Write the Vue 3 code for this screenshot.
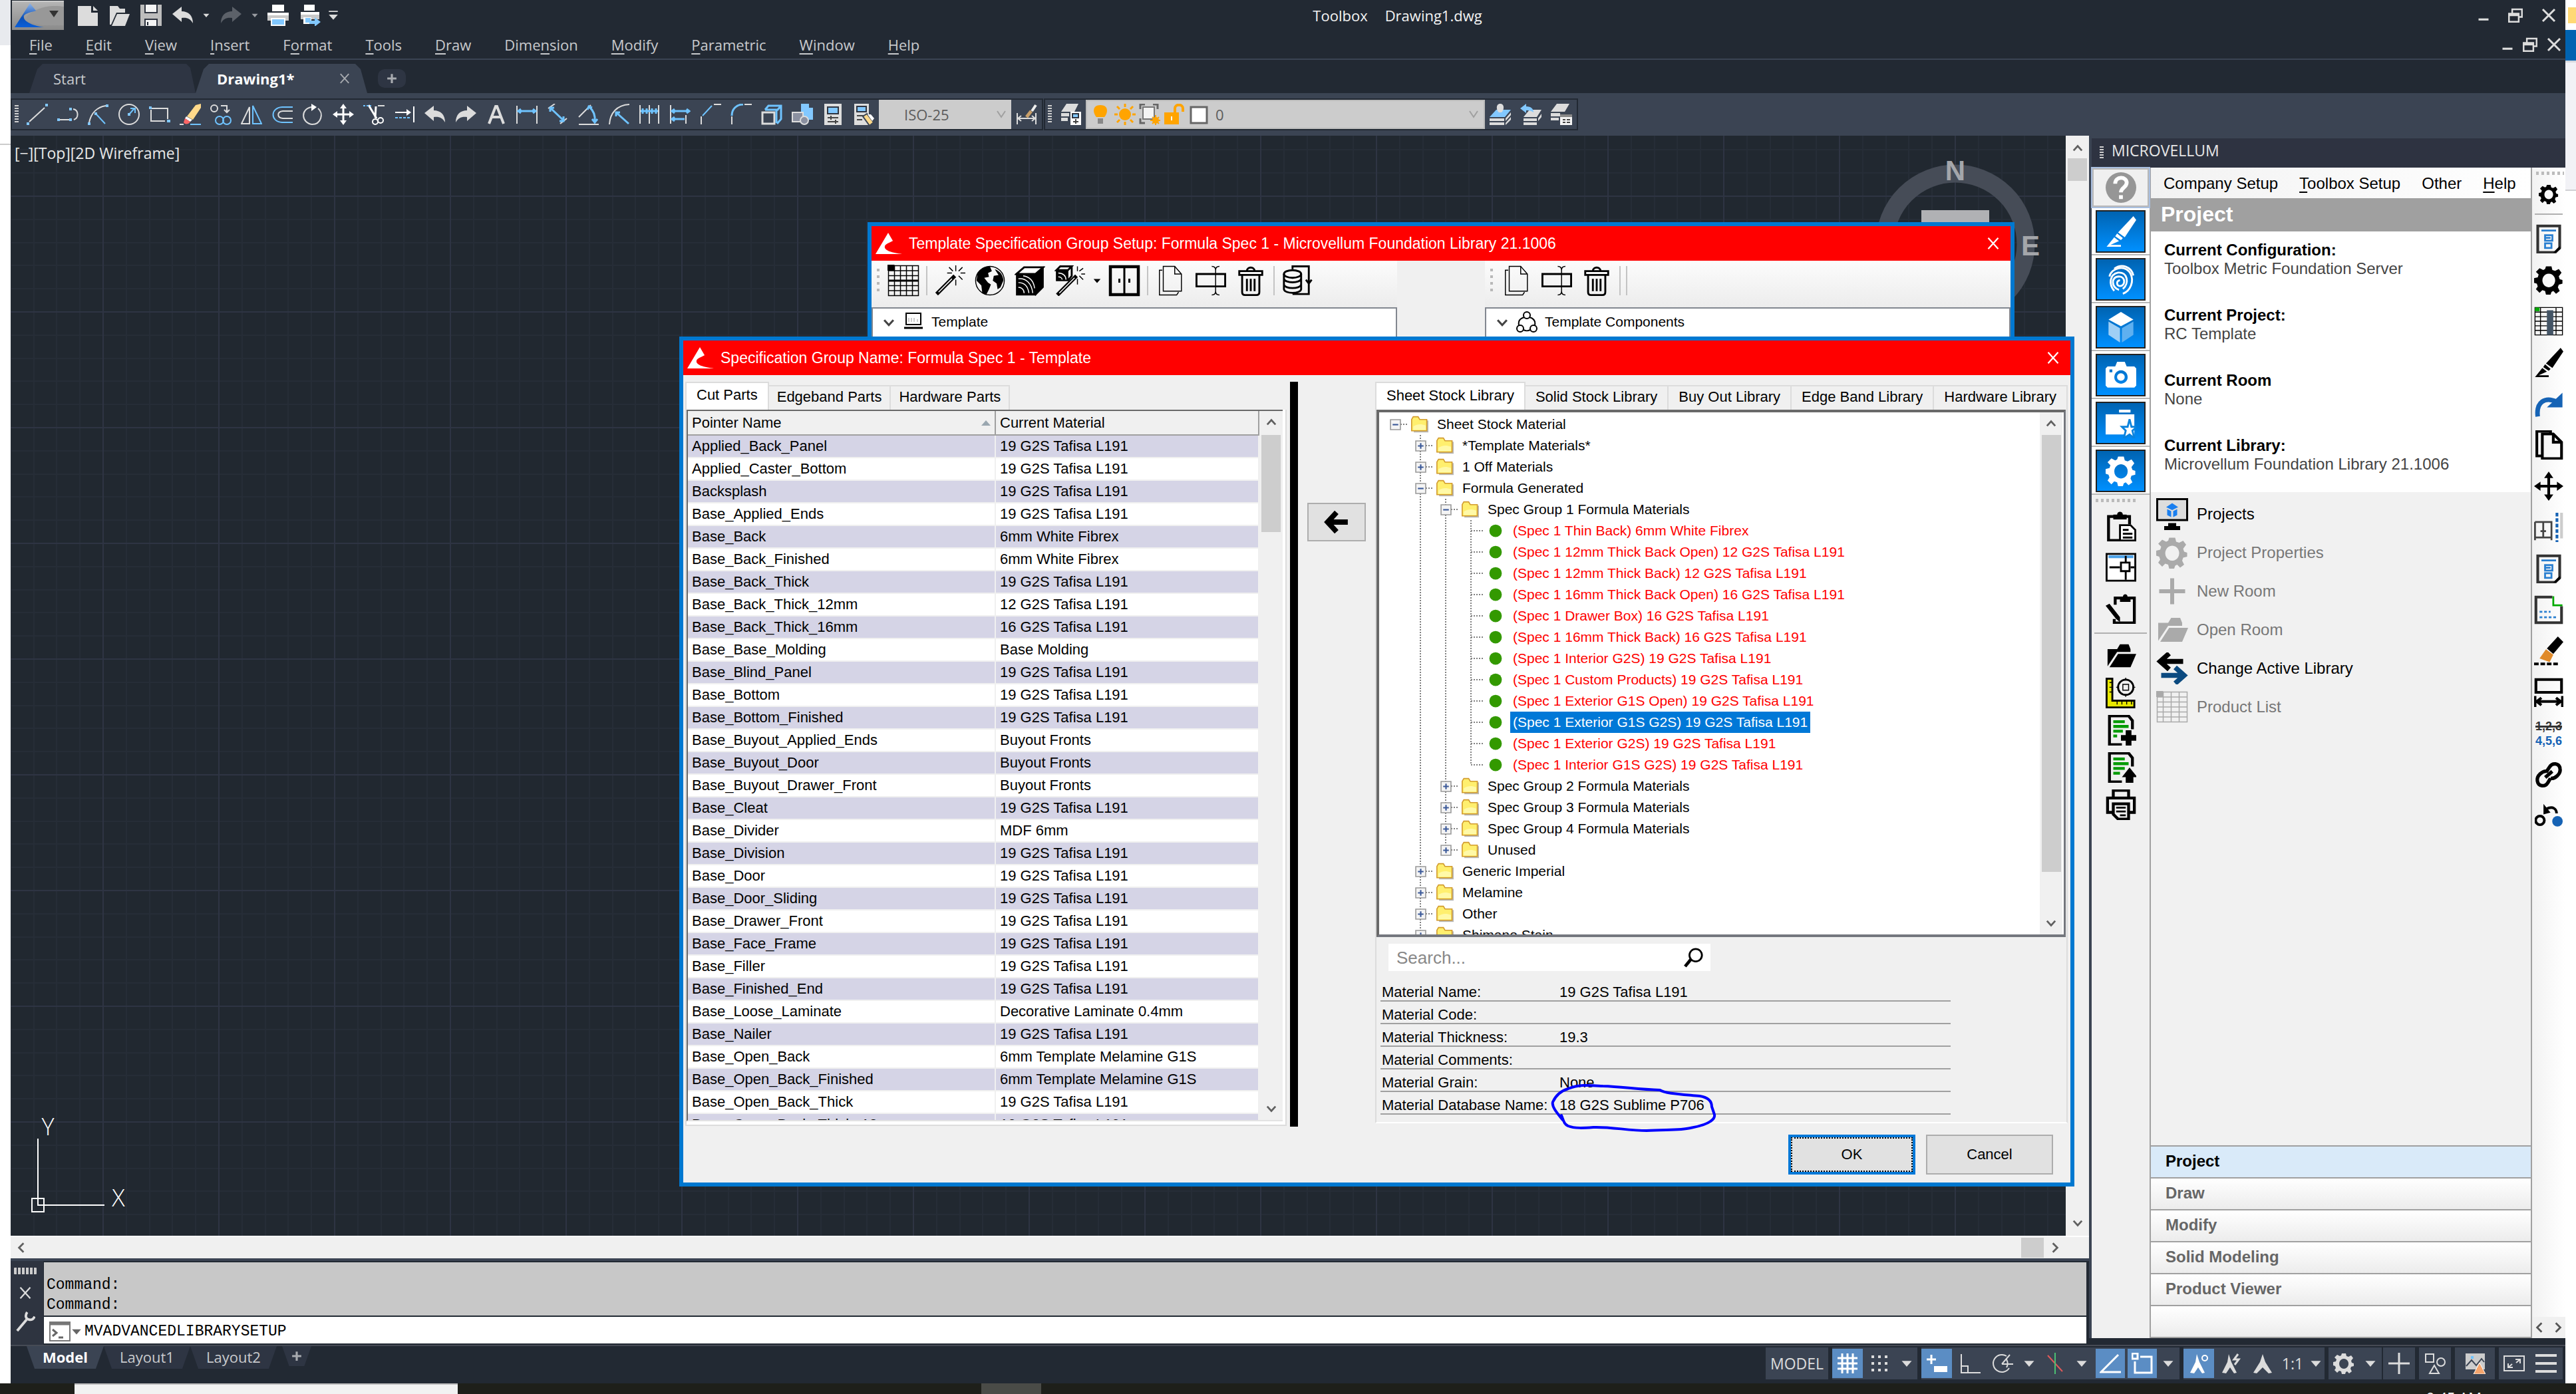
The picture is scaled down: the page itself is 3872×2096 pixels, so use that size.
<script setup>
import { h, ref } from 'vue'

const F = 'fill="currentColor" stroke="none"'
const B = 'stroke="#6fc3ff"'
const BF = 'fill="#82c8ff" stroke="none"'
const gearPath = (f) => `<path ${f} fill-rule="evenodd" d="M13 1h6l1 4 3 1 4-2 3 4-3 4 1 3 3 1v4l-4 1-1 3 2 4-4 3-3-3-2 1-1 3h-5l-1-4-3-1-3 3-4-4 2-3-1-3-3-1v-5l4-1 1-3-3-3 4-4 4 2 2-1zM16 9a7 7.500 0 1 0 .1 0z"/>`
const logo = `<path ${F} d="M19 0 0 32H40C26 30 12 27 14 20 15 16 26 13 26 12z"/>`

const icons = {
  logo,
  page: `<path ${F} d="M2 2h20v10h10v20H2z"/><path ${F} d="M25 2l7 7h-7z"/>`,
  open: `<path ${F} d="M2 2h12l3 4h8v6H12L4 30H2z"/><path ${F} d="M13 14h19l-7 18H5z"/>`,
  save: `<path fill="#bdbdbd" stroke="none" d="M0 0h32v32H0z"/><path fill="#f4f4f4" stroke="#2e3440" d="M7-2h18v14H7zM7 22h18v12H7z"/><path d="M11 26v5" stroke="#222933"/>`,
  undo: `<path ${F} d="M0 14 14 3v7c10 0 17 6 17 18-4-7-9-9-17-8v6z"/>`,
  redo: `<path ${F} d="M32 14 18 3v7C8 10 1 16 1 28c4-7 9-9 17-8v6z"/>`,
  print: `<path fill="#fff" stroke="none" d="M7 0h18v10H7zM0 12h32v6H0z"/><path fill="#c9c9c9" stroke="none" d="M0 16h32v8H0z"/><path fill="#82c8ff" stroke="#fff" d="M6 21h20v10H6z"/>`,
  printGo: `<path fill="#fff" stroke="none" d="M7 0h16v9H7zM2 11h28v5H2z"/><path fill="#c9c9c9" stroke="none" d="M2 15h28v7H2z"/><path fill="#fff" stroke="none" d="M6 19h12v10H6z"/><path ${BF} d="M9 20h8v7H9zM15 24h8v-5l9 7-9 7v-4h-8z"/>`,
  caret: `<path ${F} d="M4 10h24L16 24z"/>`,
  caretBar: `<path ${F} d="M4 14h24L16 28zM4 4h24v3H4z"/>`,
  minimize: `<path d="M4 26h24" stroke-width="5"/>`,
  restore: `<path d="M10 12V5h18v14h-6M4 13h18v15H4zM4 16h18" stroke-width="3"/>`,
  close: `<path d="M4 4l24 24M28 4 4 28" stroke-width="4"/>`,
  x: `<path d="M6 5l20 22M26 5 6 27" stroke-width="3"/>`,
  plus: `<path d="M16 5v22M5 16h22" stroke-width="5"/>`,
  line: `<path d="M4 27 27 6"/><path ${BF} d="M0 28h4v4H0zM28 0h4v4h-4z"/>`,
  pline: `<path d="M4 24h17M24 8c8 1 9 13 1 16"/><path ${BF} d="M0 22h4v4H0zM18 22h4v4h-4zM18 6h4v4h-4z"/>`,
  arc: `<path d="M2 28C5 14 14 5 27 3"/><path ${B} d="M12 15l14 15"/><path ${BF} d="M0 28h4v4H0zM10 13h4v4h-4zM27 1h4v4h-4z"/>`,
  circle: `<circle cx="16" cy="16" r="15"/><path ${B} d="M16 16l8-9M18 7h7v7"/><path ${BF} d="M14 14h4v4h-4z"/>`,
  rect: `<path d="M4 7h24v16M24 26H3V9"/><path ${BF} d="M0 4h4v4H0zM27 24h5v4h-5z"/>`,
  eraser: `<path stroke="#ddd" d="M0 31h6"/><path ${B} d="M16 31h16"/><path fill="#ffd98a" stroke="none" d="M24 2l8-2v6L20 24l-9-5z"/><path fill="#fff" stroke="none" d="M10 19l9 5-3 3-8-5z"/><path fill="#f66" stroke="none" d="M8 22l8 5c-3 5-9 4-10 1z"/>`,
  copyObj: `<circle cx="6" cy="7" r="5"/><path d="M16 3h9v9M21 9l4 4 4-4"/><circle ${B} cx="14" cy="25" r="6"/><circle ${B} cx="25" cy="25" r="6"/>`,
  mirror: `<path d="M13 5v25H1z"/><path ${B} d="M18 3v27h13z"/>`,
  offset: `<path ${B} d="M32 5H16C-2 6-2 27 16 28h16"/><path d="M32 11H17c-9 1-9 10 0 11h15" />`,
  rotate: `<path d="M14 5C-3 8-1 29 15 31c14 0 18-17 9-24" /><path fill="#fff" stroke="none" d="M14 0l8 5-8 6z"/>`,
  move: `<path stroke="#fff" stroke-width="3" d="M16 4v24M4 16h24"/><path fill="#fff" stroke="none" d="M16 0l5 7H11zM16 32l5-7H11zM0 16l7-5v10zM32 16l-7-5v10z"/>`,
  trim: `<path stroke="#fff" stroke-width="3" d="M8 2l12 20M19 4l-1 17"/><circle stroke="#fff" cx="18" cy="27" r="4"/><circle stroke="#fff" cx="26" cy="25" r="4"/><path ${B} stroke-dasharray="3 2" d="M0 3h12"/><path d="M22 3h10"/>`,
  extend: `<path stroke="#fff" d="M30 4v24M2 13h22"/><path fill="#fff" stroke="none" d="M19 8l7 5-7 5z"/><path ${B} stroke-dasharray="4 2" d="M2 21h24"/>`,
  bigA: `<path stroke-width="4" d="M5 30 15 4h2l10 26M9 20h14"/>`,
  dimLin: `<path d="M1 3v27M31 3v27"/><path ${B} stroke-width="3" d="M3 11h26M7 8l-4 3 4 3M25 8l4 3-4 3"/>`,
  dimAl: `<path d="M2 7l10-7M20 30l10-8"/><path ${B} stroke-width="3" d="M5 6l20 19M5 12V6h6M25 19v7h-6"/>`,
  dimAng: `<path d="M2 20 20 2M2 31h30"/><path ${B} stroke-width="3" d="M18 5c7 6 9 13 8 22M15 9l2-5 5 2M22 23l4 5 4-5"/>`,
  dimArc: `<path d="M2 31C3 14 13 2 32 1"/><path ${B} stroke-width="3" d="M12 13l19 17M12 19v-6h6"/>`,
  dimCont: `<path d="M2 2v28M16 2v28M30 2v28"/><path ${B} stroke-width="3" d="M3 11h26M6 7v8M12 7v8M20 7v8M26 7v8"/>`,
  dimBase: `<path d="M2 2v28M25 17v13"/><path ${B} stroke-width="3" d="M4 11h26M4 23h19M8 8l-4 3 4 3M26 8l4 3-4 3M8 20l-4 3 4 3"/>`,
  chamfer: `<path d="M2 19v12M21 1h11"/><path ${B} d="M4 18 18 3"/>`,
  fillet: `<path d="M2 19v12M21 1h11"/><path ${B} stroke-width="3" d="M2 18C2 8 9 1 19 1"/>`,
  cubeWire: `<path stroke-width="3" d="M2 13h18v17H2z"/><path ${B} stroke-width="3" d="M6 9l5-6h19v20l-6 7M24 10l6-7M6 9h17v20"/>`,
  blocks: `<path ${BF} d="M14 0h12v6h6v18H14z"/><path fill="#8b90a0" stroke="#ddd" d="M1 13h16v14H1z"/><circle cx="19" cy="25" r="6" fill="#8b90a0"/>`,
  calc: `<path fill="#ddd" stroke="none" d="M3 0h26v32H3z"/><path fill="#82c8ff" stroke="#2e3440" d="M8 5h16v10H8z"/><path stroke="#444" d="M8 21h16M8 27h16M13 18v6M20 24v6"/>`,
  calcPen: `<path fill="#ddd" stroke="none" d="M2 0h22v32H2z"/><path fill="#82c8ff" stroke="#2e3440" d="M6 4h14v8H6z"/><path stroke="#444" d="M6 18h10M6 24h8"/><path fill="#ffd98a" stroke="#3b4453" d="M15 19l6-4 10 13-6 5z"/><path fill="#fff" stroke="none" d="M22 16l5 0 5 6-3 4z"/>`,
  dimStyle: `<path d="M2 14v17M30 14v17M3 22h26M8 18l-5 4 5 4M24 18l5 4-5 4"/><path stroke="#eee" stroke-width="4" d="M30 2 24 11"/><path stroke="#c9a06a" stroke-width="5" d="M23 11l-7 9"/>`,
  layers: `<path ${F} d="M10 0h18l-6 12H2zM2 14h12v5H2zM2 21h10v5H2z"/><path fill="#fff" stroke="none" d="M16 12h16v20H16z"/><path fill="#82c8ff" stroke="#2e3440" d="M19 15h9v6h-9z"/><path stroke="#444" d="M20 27h8M24 23v7"/>`,
  bulb: `<path fill="#ffa400" stroke="none" d="M16 2c12 0 12 11 6 18H10C4 13 4 2 16 2z"/><path fill="#888" stroke="none" d="M12 22h8v8h-8z"/>`,
  sun: `<circle cx="16" cy="16" r="9" fill="#ffa400" stroke="none"/><path stroke="#ffa400" stroke-width="3" d="M16 0v5M16 27v5M0 16h5M27 16h5M4 4l4 4M24 24l4 4M28 4l-4 4M4 28l4-4"/>`,
  freeze: `<path fill="#f4f4f4" stroke="#777" d="M6 5h17v18H6z"/><path stroke="#666" stroke-width="3" d="M2 8V1h7M21 1h7v7M2 22v7h7"/><circle cx="25" cy="25" r="5" fill="#ffa400" stroke="none"/><path stroke="#ffa400" d="M25 17v15M17 25h15M20 20l10 10M30 20 20 30"/>`,
  lock: `<path fill="#ffa400" stroke="none" d="M1 13h22v18H1z"/><path stroke="#ffa400" stroke-width="4" d="M17 13V7c0-7 12-7 12 0v5"/><path stroke="#fff" d="M12 19v6"/>`,
  swatch: `<path fill="#fff" stroke="#666" stroke-width="3" d="M4 5h24v24H4z"/>`,
  layerCur: `<path ${BF} d="M10 9h22l-9 11H0z"/><path ${F} d="M16 0c7 0 6 10 2 13h-4c-4-3-5-13 2-13zM0 22h22v4H0zM0 28h22v4H0zM24 22l8-9v4l-8 9zM24 29l8-9v4l-8 8z"/>`,
  layerPrev: `<path ${F} d="M14 9h18l-7 11H5zM5 22h20v4H5zM5 28h20v4H5zM27 22l5-7v5l-5 6z"/><path ${BF} d="M0 7l9-7v4c8 0 11 4 11 9-4-3-7-3-11-3v4z"/>`,
  layerList: `<path ${F} d="M9 0h19l-7 12H0zM0 14h14v5H0zM0 21h12v4H0z"/><path fill="#f4f4f4" stroke="none" d="M14 16h18v16H14z"/><path stroke="#888" stroke-width="4" d="M14 18h18"/><path stroke="#444" d="M18 24h4M24 24h5M18 28h4M24 28h5"/>`,
  grid: `<path d="M1 1h30v30H1zM1 6h30M1 11h30M1 21h30M1 26h30M7 1v30M13 1v30M19 1v30M25 1v30"/><path stroke-width="2" d="M1 16h30"/><path ${F} d="M0 0h7v6H0z"/>`,
  wand: `<path stroke-width="4" d="M2 30 21 11"/><path stroke="#fff" stroke-width="1" d="M4 28l14-14"/><path stroke-width="1" d="M22 0v6M22 15v6M13 8h5M27 8h5M15 2l4 4M29 2l-4 4M29 15l-4-4"/>`,
  globe: `<circle cx="16" cy="16" r="15"/><path ${F} d="M3 8c3-4 8-7 13-7l2 5-4 2 1 4-5 1 4 5 3 2-2 5-3 6-4-2-1-8-5-5zM21 4c6 2 9 7 9 12l-3 7-3 2-1-6-4-3 1-5 5-1z"/>`,
  solid: `<path fill="currentColor" d="M2 9h20v22H2z"/><path fill="#fff" stroke-width="2" d="M2 9l8-7h20l-8 7z"/><path fill="currentColor" d="M22 9l8-7v21l-8 8z"/><path stroke="#fff" stroke-width="1" d="M4 14c8-1 14 5 15 15M4 18c6 0 10 4 11 11M4 23c3 0 6 2 6 6M9 11c7 1 11 6 12 13"/>`,
  solidWand: `<path fill="currentColor" d="M2 5h12v11H2z"/><path stroke-width="2" d="M2 5l4-4h12l-4 4zM18 1v10l-4 5"/><path stroke="#fff" d="M4 8c5 0 8 3 8 7M4 12c2 0 4 1 4 3"/><path stroke-width="4" d="M3 31 23 11"/><path stroke="#fff" d="M5 29l16-16"/><path stroke-width="1" d="M24 1v5M24 14v6M28 9h4M30 3l-4 3M30 15l-4-4"/>`,
  cabinet: `<path stroke-width="3" d="M2 2h28v28H2z"/><path stroke-width="2" d="M16 2v28M11 14v4M21 14v4"/>`,
  copy: `<path d="M8 1h12l7 8v18H8z"/><path d="M20 1v8h7M7 5H4v26h18l2-3"/>`,
  rename: `<path stroke-width="2" d="M1 9h30v13H1z"/><path d="M21 4v24M17 1c2 0 4 1 4 4 0-3 2-4 4-4M17 31c2 0 4-1 4-4 0 3 2 4 4 4"/>`,
  trash: `<path d="M7 10h18v18c0 2-1 3-3 3H10c-2 0-3-1-3-3zM4 6h24v4H4zM12 6c0-5 8-5 8 0M12 14v13M16 14v13M20 14v13" stroke-width="2"/>`,
  database: `<ellipse cx="11" cy="9" rx="9" ry="4" stroke-width="2"/><path stroke-width="2" d="M2 9v16c1 5 17 5 18 0V9M2 14c1 5 17 5 18 0M2 20c1 5 17 5 18 0M11 4V1h17v29H11M25 15l3 4 3-4"/>`,
  monitorS: `<path stroke-width="2" d="M5 3h22v17H5z"/><path stroke-width="3" d="M2 25h28"/><path stroke="#999" stroke-width="1" d="M9 10v6M13 10v6M17 10v6M22 12v4"/>`,
  nodes: `<circle cx="16" cy="6" r="5"/><circle cx="6" cy="26" r="5"/><circle cx="26" cy="26" r="5"/><path d="M12 9C5 11 3 16 4 21M20 9c7 2 9 7 8 12M11 28c4 2 6 2 10 0"/>`,
  chevD: `<path stroke-width="5" d="M5 10l11 12 11-12"/>`,
  chevU: `<path stroke-width="5" d="M5 22 16 10l11 12"/>`,
  chevL: `<path stroke-width="5" d="M22 4 10 16l12 12"/>`,
  chevR: `<path stroke-width="5" d="M10 4l12 12-12 12"/>`,
  arrowL: `<path stroke-width="7" d="M31 16H5M16 3 4 16l12 13"/>`,
  folder: `<path fill="#b8b8b8" stroke="none" d="M5 9h27v22H5z"/><path fill="#ffef6e" stroke="#d29b2e" stroke-width="2" d="M1 28V7l3-5h9l3 5h13v21z"/><path fill="#fff9a8" stroke="none" d="M4 20c8-5 14-5 23-2v8H4z"/>`,
  plusBox: `<path fill="#f4f4f4" stroke="#999" stroke-width="3" d="M2 2h28v28H2z"/><path stroke="#3b5998" stroke-width="4" d="M8 16h16M16 8v16"/>`,
  minusBox: `<path fill="#f4f4f4" stroke="#999" stroke-width="3" d="M2 2h28v28H2z"/><path stroke="#3b5998" stroke-width="4" d="M8 16h16"/>`,
  dot: `<circle cx="16" cy="16" r="15" fill="#339900" stroke="none"/>`,
  search: `<circle cx="19" cy="12" r="10" stroke-width="3"/><path stroke-width="5" d="M11 19 2 30"/>`,
  help: `<circle cx="16" cy="16" r="16" fill="#969696" stroke="none"/><path stroke="#fff" stroke-width="4" d="M10 12c0-8 12-8 12-1 0 5-6 5-6 10M16 24v4"/>`,
  pen: `<path ${F} d="M29 0l3 4-12 18-7-5zM12 18l6 5-2 2-6-4zM9 22l5 4-9 4h11v2H1z"/>`,
  finger: `<g stroke-width="2"><path d="M9 5c8-6 18-2 20 7"/><path d="M4 13c2-9 16-13 22-3 4 8 0 18-8 21"/><path d="M9 28C3 21 4 11 13 9c10-1 12 11 5 17"/><path d="M14 27c-8-2-9-14 0-14 7 0 7 10 1 10-4 0-4-6 0-6"/></g>`,
  cube: `<path fill="#fff" stroke="none" d="M16 0l13 8-13 7L3 8z"/><path fill="#9fcff5" stroke="none" d="M3 10l12 7v15L3 24z"/><path fill="#5fb0f0" stroke="none" d="M29 10l-12 7v15l12-8z"/>`,
  camera: `<path fill="currentColor" stroke="none" fill-rule="evenodd" d="M2 7h8l2-5h8l2 5h8l2 2v18l-2 2H2l-2-2V9zM16 11a7 7 0 1 0 .1 0zM16 14a4 4 0 1 1-.1 0zM4 10h3v3H4z"/>`,
  folderStar: `<path ${F} d="M14 2h12v3H14zM0 7h30v21H0z"/><path fill="#fff" stroke="#0a83dd" d="M25 12l2 8h6l-5 4 2 8-5-4-6 4 2-8-4-4h6z"/>`,
  gear: gearPath(F),
  paste: `<path stroke-width="3" d="M15 31H3V6h22v8"/><path ${F} d="M8 4h4c0-4 6-4 6 0h4v5H8z"/><path fill="#fff" stroke-width="2" d="M15 15h11l5 5v11H15z"/><path d="M18 20h6M18 24h10M18 28h10"/>`,
  bench: `<path fill="#fff" stroke-width="2" d="M1 2h30v28H1z"/><path stroke="#4ea3e8" stroke-width="3" d="M3 5h26"/><path d="M4 16h11M21 4v7M21 20v9M26 16h4" stroke-width="2"/><path stroke-width="2" d="M16 11h9v9h-9z"/>`,
  clipPen: `<path stroke-width="3" d="M10 12V5h20v26H9v-4"/><path ${F} d="M15 4h3c0-4 5-4 5 0h3v5H15zM0 13l4-2 11 14v5l-4-3z"/>`,
  folderB: `<path ${F} d="M2 27V9h10l3-5h9l2 5v3H12zM13 14h19l-6 14H4z"/>`,
  ruler: `<path fill="#e8e800" stroke-width="2" d="M1 1h6v23h23v7H1z"/><path stroke-width="1" d="M4 5h3M4 10h3M4 15h3M12 25v3M17 25v3M22 25v3M27 25v3"/><circle cx="21" cy="10" r="8" stroke-width="2"/><path stroke-width="1" d="M18 7h6v6h-6zM21 0v3M21 17v3M11 10h3M28 10h3"/>`,
  listAdd: `<path stroke-width="3" d="M17 31H4V1h20l4 5v9"/><path stroke="#009a00" stroke-width="3" d="M8 7h12M8 12h16M8 17h10M8 22h4"/><path stroke-width="6" d="M24 16v16M16 24h16"/>`,
  listUp: `<path stroke-width="3" d="M17 31H4V1h20l4 5v9"/><path stroke="#009a00" stroke-width="3" d="M8 7h12M8 12h16M8 17h12M8 22h7"/><path ${F} d="M25 16l8 10h-4v6h-8v-6h-4z"/>`,
  printer: `<path stroke-width="3" d="M8 8V1h16v7M8 24H2V9h28v15h-6M8 15h16v16H13l-5-5z"/><path d="M11 19h10M11 23h10M15 27h6"/>`,
  monitor: `<path fill="#ddd" stroke-width="2" d="M1 1h30v21H1z"/><path ${F} d="M12 25h8v3h4v4H8v-4h4z"/><path fill="#1a7ff0" stroke="none" d="M16 5l6 4-6 3-6-3zM11 11l4 2v6l-4-2zM21 11l-4 2v6l4-2z"/>`,
  bigPlus: `<path stroke-width="4" d="M16 3v26M3 16h26"/>`,
  swap: `<path stroke-width="5" d="M27 9H4M13 1 4 9l9 8"/><path stroke="#0b4a80" stroke-width="5" d="M5 23h23M19 15l9 8-9 8"/>`,
  gridG: `<path stroke-width="1" d="M1 1h30v30H1zM1 6h30M1 11h30M1 16h30M1 21h30M1 26h30M7 1v30M15 1v30M23 1v30"/><path ${F} d="M0 0h7v6H0z"/>`,
  docBlue: `<path stroke="#333" stroke-width="3" d="M4 2h24v24l-5 5H4z"/><path ${F} d="M28 24l-7 7h3l5-4z"/><path stroke="#2a7fd0" stroke-width="2" d="M8 7h16M12 12h8v6h-8zM12 15h6M12 21h7v5h-7z"/>`,
  sheet: `<path stroke-width="1" d="M1 1h30v30H1zM1 6h30M1 11h30M1 16h30M1 21h30M1 26h30M7 1v30M24 1v30"/><path fill="#456" stroke="none" d="M14 4h7v27h-7z"/><path fill="#0a0" stroke="none" d="M1 1h5v4H1z"/>`,
  redoB: `<path stroke="#1663b5" stroke-width="5" d="M4 30C2 14 12 8 25 14"/><path fill="#1663b5" stroke="none" d="M31 4v16H14z"/>`,
  pages: `<path stroke-width="3" d="M9 4h12l9 9v18H9z"/><path d="M21 4v9h9M8 28H3V1h15v3" stroke-width="3"/>`,
  moveB: `<path stroke-width="3" d="M16 4v24M4 16h24"/><path ${F} d="M16 0l5 7H11zM16 32l5-7H11zM0 16l7-5v10zM32 16l-7-5v10z"/>`,
  cabLine: `<path stroke="#444" stroke-width="2" d="M1 10h18v20M1 10v20M1 27h18M10 10v17M7 20h6"/><path stroke="#1663b5" stroke-width="3" stroke-dasharray="4 2" d="M25 0v32"/><path stroke="#ccc" stroke-width="3" d="M30 0v28"/>`,
  docGreen: `<path stroke="#333" stroke-width="3" d="M20 2H2v28h28V12"/><path stroke="#0a0" stroke-width="2" d="M21 1v10h10"/><path stroke="#2a7fd0" stroke-dasharray="3 2" d="M6 18h12M6 24h20"/>`,
  broom: `<path ${F} d="M26 0l6 6-11 13-7-6z"/><path fill="#e08a2a" stroke="none" d="M13 14l8 6-4 8-11-4z"/><path stroke-width="3" stroke-dasharray="5 2" d="M0 30h26"/>`,
  dimBox: `<path stroke-width="3" d="M2 2h28v14H2zM1 20v12M31 20v12M3 26h26M8 22l-5 4 5 4M24 22l5 4-5 4"/>`,
  link: `<path stroke-width="4" d="M14 12c-5-1-12 5-11 11 1 7 9 7 12 2l3-5M18 20c5 1 12-5 11-11-1-7-9-7-12-2l-4 6M12 19l8-7"/>`,
  swing: `<circle cx="6" cy="21" r="5" stroke-width="3"/><circle cx="26" cy="22" r="6" fill="#1663b5" stroke="none"/><path stroke-width="3" d="M13 8c8-4 12 0 12 5"/><path ${F} d="M10 2v12l8-2z"/>`,
  cmd: `<path fill="#fff" stroke="#777" stroke-width="2" d="M1 2h30v28H1z"/><path stroke="#777" stroke-width="5" d="M1 4h30"/><path stroke="#666" stroke-width="3" d="M5 13l6 5-6 5M14 25h7"/>`,
  wrench: `<path stroke-width="4" d="M3 31 18 13"/><path stroke-width="4" d="M19 1c-4 6-2 11 3 12 4 1 7-1 9-5"/>`,
  sGrid: `<path stroke="#fff" stroke-width="3" d="M8 1v30M16 1v30M24 1v30M1 8h30M1 16h30M1 24h30"/>`,
  sDots: `<path stroke-width="4" stroke-dasharray="4 6" d="M4 6h26M4 16h26M4 26h26"/>`,
  sInfer: `<path stroke="#fff" stroke-width="3" d="M8 3v14M1 10h14"/><path fill="#fff" stroke="none" d="M12 20h20v9H12z"/>`,
  sOrtho: `<path d="M2 2v28h29M2 20h10v10"/>`,
  sPolar: `<path d="M26 23A13 13 0 1 1 22 5M15 17h17M15 17 27 3M22 10c2 4 2 9 0 12"/>`,
  sIso: `<path stroke="#e05a5a" d="M5 4l22 24"/><path stroke="#4bbf73" d="M16 0v32"/>`,
  sAngle: `<path stroke="#fff" stroke-width="3" d="M28 3 2 29h30"/>`,
  sSnap: `<path stroke="#fff" stroke-width="3" d="M13 6h17v24H5V13M1 1h8v8H1z"/>`,
  sAnn: `<path fill="#fff" stroke="none" d="M13 2l4 12 8 16-4 1-6-9-6 9-6-1 8-16z"/><circle cx="25" cy="8" r="4" stroke="#fff"/>`,
  sAnn2: `<path ${F} d="M13 2l4 12 8 16-4 1-6-9-6 9-6-1 8-16z"/><path stroke-width="3" d="M27 2l-6 8h7l-6 8"/>`,
  sAnn3: `<path ${F} d="M16 2l4 12 10 16-5 1-9-9-9 9-5-1 10-16z"/>`,
  sPlus: `<path stroke-width="3" d="M16 0v32M0 16h32"/>`,
  sShapes: `<path stroke-width="2" d="M2 2h12v12H2zM15 19l7 12H8z"/><circle cx="25" cy="14" r="6"/>`,
  sPic: `<path fill="#ccc" stroke="none" d="M2 1h29v24H2z"/><path stroke="#3b4453" d="M3 20l8-9 7 8 8-10 4 5"/><path fill="#6fc3ff" stroke="none" d="M10 5h4v4h-4z"/><path fill="#f4a46c" stroke="#fff" stroke-width="1" d="M23 15l9 17H14z"/>`,
  sFull: `<path d="M1 5h30v22H1zM7 16v6h7M25 16v-6h-7M7 22l6-5M25 10l-6 5"/>`,
  sMenu: `<path stroke-width="4" d="M0 4h32M0 16h32M0 28h32"/>`,
}

const Ico = (p) =>
  h('svg', {
    viewBox: p.n === 'logo' ? '0 0 40 32' : '0 0 32 32',
    width: p.w || p.s || 32,
    height: p.s || 32,
    fill: 'none',
    stroke: 'currentColor',
    'stroke-width': 2,
    'aria-hidden': 'true',
    innerHTML: icons[p.n],
  })
Ico.props = ['n', 's', 'w']

const menus = [['', 'F', 'ile'], ['', 'E', 'dit'], ['', 'V', 'iew'], ['', 'I', 'nsert'], ['F', 'o', 'rmat'], ['', 'T', 'ools'], ['', 'D', 'raw'], ['Dime', 'n', 'sion'], ['', 'M', 'odify'], ['', 'P', 'arametric'], ['', 'W', 'indow'], ['', 'H', 'elp']]
const drawTools = ['line', 'pline', 'arc', 'circle', 'rect', 'eraser', 'copyObj', 'mirror', 'offset', 'rotate', 'move', 'trim', 'extend', 'undo', 'redo', 'bigA', 'dimLin', 'dimAl', 'dimAng', 'dimArc', 'dimCont', 'dimBase', 'chamfer', 'fillet', 'cubeWire', 'blocks', 'calc', 'calcPen']

const G = '19 G2S Tafisa L191'
const parts = [
  ['Applied_Back_Panel', G], ['Applied_Caster_Bottom', G], ['Backsplash', G], ['Base_Applied_Ends', G],
  ['Base_Back', '6mm White Fibrex'], ['Base_Back_Finished', '6mm White Fibrex'], ['Base_Back_Thick', G],
  ['Base_Back_Thick_12mm', '12 G2S Tafisa L191'], ['Base_Back_Thick_16mm', '16 G2S Tafisa L191'],
  ['Base_Base_Molding', 'Base Molding'], ['Base_Blind_Panel', G], ['Base_Bottom', G], ['Base_Bottom_Finished', G],
  ['Base_Buyout_Applied_Ends', 'Buyout Fronts'], ['Base_Buyout_Door', 'Buyout Fronts'], ['Base_Buyout_Drawer_Front', 'Buyout Fronts'],
  ['Base_Cleat', G], ['Base_Divider', 'MDF 6mm'], ['Base_Division', G], ['Base_Door', G], ['Base_Door_Sliding', G],
  ['Base_Drawer_Front', G], ['Base_Face_Frame', G], ['Base_Filler', G], ['Base_Finished_End', G],
  ['Base_Loose_Laminate', 'Decorative Laminate 0.4mm'], ['Base_Nailer', G], ['Base_Open_Back', '6mm Template Melamine G1S'],
  ['Base_Open_Back_Finished', '6mm Template Melamine G1S'], ['Base_Open_Back_Thick', G], ['Base_Open_Back_Thick_12mm', G],
]
const leaf = (t, o = {}) => ({ t, l: 3, k: 'dot', ...o })
const tree = [
  { t: 'Sheet Stock Material', l: 0, k: 'minusBox' },
  { t: '*Template Materials*', l: 1, k: 'plusBox' },
  { t: '1 Off Materials', l: 1, k: 'plusBox' },
  { t: 'Formula Generated', l: 1, k: 'minusBox' },
  { t: 'Spec Group 1 Formula Materials', l: 2, k: 'minusBox' },
  leaf('(Spec 1 Thin Back) 6mm White Fibrex'),
  leaf('(Spec 1 12mm Thick Back Open) 12 G2S Tafisa L191'),
  leaf('(Spec 1 12mm Thick Back) 12 G2S Tafisa L191'),
  leaf('(Spec 1 16mm Thick Back Open) 16 G2S Tafisa L191'),
  leaf('(Spec 1 Drawer Box) 16 G2S Tafisa L191'),
  leaf('(Spec 1 16mm Thick Back) 16 G2S Tafisa L191'),
  leaf('(Spec 1 Interior G2S) 19 G2S Tafisa L191'),
  leaf('(Spec 1 Custom Products) 19 G2S Tafisa L191'),
  leaf('(Spec 1 Exterior G1S Open) 19 G2S Tafisa L191'),
  leaf('(Spec 1 Exterior G1S G2S) 19 G2S Tafisa L191', { on: true }),
  leaf('(Spec 1 Exterior G2S) 19 G2S Tafisa L191'),
  leaf('(Spec 1 Interior G1S G2S) 19 G2S Tafisa L191', { last: true }),
  { t: 'Spec Group 2 Formula Materials', l: 2, k: 'plusBox' },
  { t: 'Spec Group 3 Formula Materials', l: 2, k: 'plusBox' },
  { t: 'Spec Group 4 Formula Materials', l: 2, k: 'plusBox' },
  { t: 'Unused', l: 2, k: 'plusBox', last: true },
  { t: 'Generic Imperial', l: 1, k: 'plusBox' },
  { t: 'Melamine', l: 1, k: 'plusBox' },
  { t: 'Other', l: 1, k: 'plusBox' },
  { t: 'Shimano Stain', l: 1, k: 'plusBox' },
]
const leftTabs = ['Cut Parts', 'Edgeband Parts', 'Hardware Parts']
const rightTabs = ['Sheet Stock Library', 'Solid Stock Library', 'Buy Out Library', 'Edge Band Library', 'Hardware Library']
const details = [['Material Name:', '19 G2S Tafisa L191'], ['Material Code:', ''], ['Material Thickness:', '19.3'], ['Material Comments:', ''], ['Material Grain:', 'None'], ['Material Database Name:', '18 G2S Sublime P706']]
const info = [['Current Configuration:', 'Toolbox Metric Foundation Server'], ['Current Project:', 'RC Template'], ['Current Room', 'None'], ['Current Library:', 'Microvellum Foundation Library 21.1006']]
const actions = [['monitor', 'Projects', 1], ['gear', 'Project Properties', 0], ['bigPlus', 'New Room', 0], ['folderB', 'Open Room', 0], ['swap', 'Change Active Library', 1], ['gridG', 'Product List', 0]]
const sections = ['Project', 'Draw', 'Modify', 'Solid Modeling', 'Product Viewer', '']
const modes = ['pen', 'finger', 'cube', 'camera', 'folderStar', 'gear']
const sideA = ['paste', 'bench', 'clipPen']
const sideB = ['folderB', 'ruler', 'listAdd', 'listUp', 'printer']
const railA = ['docBlue', 'gear', 'sheet', 'pen', 'redoB', 'pages', 'moveB', 'cabLine', 'docBlue', 'docGreen', 'broom', 'dimBox']
const railB = ['link', 'swing']
const status = [
  [['t', 94, 'MODEL']],
  [['on', 46, 'sGrid'], ['i', 50, 'sDots'], ['c', 32]],
  [['on', 46, 'sInfer'], ['i', 56, 'sOrtho'], ['i', 40, 'sPolar'], ['c', 40], ['i', 38, 'sIso'], ['c', 42], ['on', 44, 'sAngle'], ['g', 4], ['on', 44, 'sSnap'], ['c', 34]],
  [['on', 46, 'sAnn'], ['i', 50, 'sAnn2'], ['i', 46, 'sAnn3'], ['t', 44, '1:1'], ['c', 26]],
  [['i', 46, 'gear'], ['c', 34]],
  [['i', 48, 'sPlus']],
  [['i', 48, 'sShapes']],
  [['i', 60, 'sPic']],
  [['i', 46, 'sFull'], ['i', 50, 'sMenu']],
]
const search = ref('')
const command = ref('MVADVANCEDLIBRARYSETUP')
</script>

<template>
  <div class="screen">
    <div class="desk">
      <div class="edge left"></div>
      <div class="app">
        <header class="titlebar">
          <button class="appbtn" aria-label="Application menu">
            <svg width="78" height="44" viewBox="0 0 78 44" aria-hidden="true">
              <defs>
                <linearGradient id="lg" x1="0" y1="0" x2="0" y2="1"><stop offset="0" stop-color="#8fb4e8" /><stop offset=".6" stop-color="#0a50b8" /><stop offset="1" stop-color="#0b5fd8" /></linearGradient>
              </defs>
              <path fill="#989898" d="M34 14C50 6 66 6 78 8v28H46C20 32 14 24 34 14z" />
              <path fill="url(#lg)" d="M27 3 4 39h44C28 36 16 29 18 22 20 17 36 15 36 14z" />
              <path fill="#333" d="M56 14h14l-7 10z" />
            </svg>
          </button>
          <nav class="quick">
            <button aria-label="New"><Ico n="page" /></button>
            <button aria-label="Open"><Ico n="open" /></button>
            <button aria-label="Save"><Ico n="save" /></button>
            <button aria-label="Undo"><Ico n="undo" /></button>
            <button class="thin" aria-label="Undo list"><Ico n="caret" s="12" /></button>
            <button class="dim" aria-label="Redo"><Ico n="redo" /></button>
            <button class="thin dim2" aria-label="Redo list"><Ico n="caret" s="12" /></button>
            <button aria-label="Plot"><Ico n="print" /></button>
            <button aria-label="Publish"><Ico n="printGo" /></button>
            <button class="thin" aria-label="Customize"><Ico n="caretBar" s="18" /></button>
          </nav>
          <h1 class="title"><span>Toolbox</span><span>Drawing1.dwg</span></h1>
          <div class="winbtns"><button aria-label="Minimize"><Ico n="minimize" s="20" /></button><button aria-label="Restore"><Ico n="restore" s="26" /></button><button aria-label="Close"><Ico n="close" s="24" /></button></div>
        </header>
        <nav class="menubar">
          <a v-for="m in menus" :key="m.join('')" href="#">{{ m[0] }}<u>{{ m[1] }}</u>{{ m[2] }}</a>
          <div class="winbtns small"><button aria-label="Minimize drawing"><Ico n="minimize" s="20" /></button><button aria-label="Restore drawing"><Ico n="restore" s="26" /></button><button aria-label="Close drawing"><Ico n="close" s="24" /></button></div>
        </nav>
        <div class="doctabs">
          <button class="doc">Start</button>
          <button class="doc cur">Drawing1*<Ico n="x" s="20" /></button>
          <button class="docplus" aria-label="New tab"><Ico n="plus" s="20" /></button>
        </div>
        <div class="ribbon">
          <div class="bar">
            <i class="grip"></i>
            <button v-for="(t, i) in drawTools" :key="i" class="tool" :aria-label="t"><Ico :n="t" /></button>
            <select class="dimsel" aria-label="Dimension style"><option>ISO-25</option></select>
            <button class="tool" aria-label="Dimension style manager"><Ico n="dimStyle" /></button>
          </div>
          <div class="bar">
            <i class="grip"></i>
            <button class="tool" aria-label="Layer properties"><Ico n="layers" /></button>
            <div class="layer">
              <Ico n="bulb" /><Ico n="sun" /><Ico n="freeze" /><Ico n="lock" /><Ico n="swatch" />
              <select aria-label="Layer"><option>0</option></select>
            </div>
            <button class="tool" aria-label="Make layer current"><Ico n="layerCur" /></button>
            <button class="tool" aria-label="Layer previous"><Ico n="layerPrev" /></button>
            <button class="tool" aria-label="Layer states"><Ico n="layerList" /></button>
          </div>
        </div>

        <div class="middle">
          <main class="work">
            <div class="viewrow">
              <div class="canvas">
                <p class="viewlabel">[−][Top][2D Wireframe]</p>
                <svg class="cubeview" width="300" height="260" viewBox="0 0 300 260" aria-hidden="true">
                  <circle cx="140" cy="140" r="106" fill="none" stroke="#464c57" stroke-width="27" />
                  <path fill="#b0b1b4" d="M89 89h102v102H89z" />
                  <text x="140" y="44" text-anchor="middle" class="compass">N</text>
                  <text x="253" y="157" text-anchor="middle" class="compass">E</text>
                </svg>
                <svg class="ucs" width="170" height="160" viewBox="0 0 170 160" fill="none" stroke="#fff" stroke-width="2" aria-hidden="true">
                  <path d="M19 42v100h100M10 132h18v20H10z" />
                  <text x="34" y="37" text-anchor="middle">Y</text>
                  <text x="140" y="144" text-anchor="middle">X</text>
                </svg>
              </div>
              <div class="vbar"><Ico n="chevU" s="18" /><i class="thumb"></i><i class="fill"></i><Ico n="chevD" s="18" /></div>
            </div>
            <div class="hbar"><Ico n="chevL" s="18" /><i class="fill"></i><i class="thumb"></i><Ico n="chevR" s="18" /></div>
            <div class="command">
              <div class="cmdside"><i class="dots"></i><button aria-label="Close"><Ico n="x" s="24" /></button><button aria-label="Settings"><Ico n="wrench" s="30" /></button></div>
              <div class="cmdmain">
                <div class="history"><p>Command:</p><p>Command:</p></div>
                <label class="prompt"><Ico n="cmd" s="32" /><Ico n="caret" s="18" /><input v-model="command" aria-label="Command line" /></label>
              </div>
            </div>

            <section class="dialog back">
              <header><Ico n="logo" s="32" w="40" /><h2>Template Specification Group Setup: Formula Spec 1 - Microvellum Foundation Library 21.1006</h2><button aria-label="Close"><Ico n="x" s="24" /></button></header>
              <div class="panes">
                <div class="pane">
                  <div class="ptools">
                    <i class="grip"></i>
                    <button aria-label="Grid"><Ico n="grid" s="48" /></button><hr />
                    <button aria-label="Wizard"><Ico n="wand" s="46" /></button>
                    <button aria-label="Globals"><Ico n="globe" s="46" /></button>
                    <button aria-label="Solid"><Ico n="solid" s="46" /></button>
                    <button aria-label="Solid wizard"><Ico n="solidWand" s="46" /></button>
                    <button class="narrow" aria-label="More"><Ico n="caret" s="14" /></button>
                    <button aria-label="Cabinet"><Ico n="cabinet" s="48" /></button><hr />
                    <button aria-label="Copy"><Ico n="copy" s="46" /></button>
                    <button aria-label="Rename"><Ico n="rename" s="46" /></button>
                    <button aria-label="Delete"><Ico n="trash" s="46" /></button><hr />
                    <button aria-label="Database"><Ico n="database" s="46" /></button>
                  </div>
                  <div class="ptree"><Ico n="chevD" s="20" /><Ico n="monitorS" s="32" /><span>Template</span></div>
                </div>
                <div class="pane">
                  <div class="ptools">
                    <i class="grip"></i>
                    <button aria-label="Copy component"><Ico n="copy" s="46" /></button>
                    <button aria-label="Rename component"><Ico n="rename" s="46" /></button>
                    <button aria-label="Delete component"><Ico n="trash" s="46" /></button><hr /><hr />
                  </div>
                  <div class="ptree"><Ico n="chevD" s="20" /><Ico n="nodes" s="32" /><span>Template Components</span></div>
                </div>
              </div>
            </section>

            <section class="dialog front">
              <header><Ico n="logo" s="32" w="40" /><h2>Specification Group Name: Formula Spec 1 - Template</h2><button aria-label="Close"><Ico n="x" s="24" /></button></header>
              <div class="cols">
                <div class="col partcol">
                  <div class="tabs"><button v-for="(t, i) in leftTabs" :key="t" :class="{ cur: !i }">{{ t }}</button></div>
                  <div class="page">
                    <div class="listbox">
                      <table>
                        <thead><tr><th class="name"><span>Pointer Name<svg width="14" height="8" viewBox="0 0 14 8" aria-hidden="true"><path d="M7 0l7 8H0z" fill="#9aa7b0" /></svg></span></th><th>Current Material</th></tr></thead>
                        <tbody><tr v-for="p in parts" :key="p[0]"><td>{{ p[0] }}</td><td>{{ p[1] }}</td></tr></tbody>
                      </table>
                      <div class="vbar list"><Ico n="chevU" s="18" /><i class="thumb"></i><i class="fill"></i><Ico n="chevD" s="18" /></div>
                    </div>
                  </div>
                </div>
                <div class="divider"></div>
                <div class="assign"><button aria-label="Assign material"><Ico n="arrowL" s="36" w="46" /></button></div>
                <div class="col libcol">
                  <div class="tabs"><button v-for="(t, i) in rightTabs" :key="t" :class="{ cur: !i }">{{ t }}</button></div>
                  <div class="page">
                    <div class="treebox">
                      <ul>
                        <li v-for="n in tree" :key="n.t" :class="{ leaf: n.l === 3, on: n.on }">
                          <i v-for="g in n.l" :key="g" class="cell" :class="{ v: g > 1 }"></i>
                          <i class="cell hz" :class="{ own: n.l > 0, last: n.last }"><Ico v-if="n.k !== 'dot'" :n="n.k" s="17" /></i>
                          <b class="slot"><Ico :n="n.k === 'dot' ? 'dot' : 'folder'" :s="n.k === 'dot' ? 20 : 26" /></b>
                          <span>{{ n.t }}</span>
                        </li>
                      </ul>
                      <div class="vbar tall"><Ico n="chevU" s="18" /><i class="thumb"></i><i class="fill"></i><Ico n="chevD" s="18" /></div>
                    </div>
                    <label class="search"><input v-model="search" placeholder="Search..." aria-label="Search" /><Ico n="search" s="30" /></label>
                    <dl>
                      <div v-for="(d, i) in details" :key="d[0]"><dt>{{ d[0] }}</dt><dd>{{ d[1] }}<svg v-if="i === 5" class="ink" width="250" height="72" viewBox="0 0 250 72" aria-hidden="true"><path fill="none" stroke="#0000ff" stroke-width="4" stroke-linejoin="round" stroke-linecap="round" d="M18 54C10 44 1 34 3 27 8 16 16 10 26 7 44 0 60 2 78 3c30 1 52 5 86 6 8 5 28 6 60 9 12 2 18 8 18 16l4 12c1 5-3 8-6 10-8 6-20 8-30 10-16 4-40 2-66 4-28 0-54-6-80-5-14 1-28 2-38-2-6-3-6-6-10-16" /></svg></dd></div>
                    </dl>
                  </div>
                </div>
              </div>
              <footer><button class="ok">OK</button><button>Cancel</button></footer>
            </section>
          </main>

          <aside class="palette">
            <h2>MICROVELLUM</h2>
            <div class="pbody">
              <div class="side">
                <button class="help" aria-label="Help"><Ico n="help" s="46" /></button>
                <div v-for="m in modes" :key="m" class="mode"><button :aria-label="m"><Ico :n="m" s="46" /></button></div>
                <i class="hgrip"></i>
                <button v-for="m in sideA" :key="m" class="s62" :aria-label="m"><Ico :n="m" s="46" /></button>
                <hr />
                <button v-for="m in sideB" :key="m" class="s56" :aria-label="m"><Ico :n="m" s="46" /></button>
              </div>
              <div class="pmain">
                <nav><a href="#">Company Setup</a><a href="#"><u>T</u>oolbox Setup</a><a href="#">Other</a><a href="#"><u>H</u>elp</a></nav>
                <h3>Project</h3>
                <dl class="info"><div v-for="r in info" :key="r[0]"><dt>{{ r[0] }}</dt><dd>{{ r[1] }}</dd></div></dl>
                <div class="actions"><button v-for="a in actions" :key="a[1]" :class="{ off: !a[2] }"><Ico :n="a[0]" s="48" />{{ a[1] }}</button></div>
                <div class="sections"><button v-for="(s, i) in sections" :key="i" :class="{ cur: !i }" :aria-label="s || 'More'">{{ s }}</button></div>
              </div>
              <div class="rail">
                <i class="hgrip"></i>
                <button class="s48" aria-label="Options"><Ico n="gear" s="30" /></button>
                <hr />
                <button v-for="(m, i) in railA" :key="i" class="s62" :aria-label="m"><Ico :n="m" s="44" /></button>
                <button class="s62 nums"><s>1,2,3</s><span>4,5,6</span></button>
                <button v-for="m in railB" :key="m" class="s62" :aria-label="m"><Ico :n="m" s="42" /></button>
                <i class="fill"></i>
                <div class="pager"><Ico n="chevL" s="18" /><Ico n="chevR" s="18" /></div>
              </div>
            </div>
          </aside>
        </div>

        <footer class="statusbar">
          <div class="layouts"><button class="cur">Model</button><button>Layout1</button><button>Layout2</button><button class="add" aria-label="New layout"><Ico n="plus" s="20" /></button></div>
          <div class="toggles">
            <div v-for="(b, i) in status" :key="i" class="block">
              <button v-for="(c, j) in b" :key="j" :class="c[0]" :style="{ width: c[1] + 'px' }" :aria-label="c[2] || 'list'"><template v-if="c[0] === 't'">{{ c[2] }}</template><Ico v-else-if="c[0] === 'c'" n="caret" s="20" /><Ico v-else-if="c[0] !== 'g'" :n="c[2]" /></button>
            </div>
          </div>
        </footer>
      </div>
      <div class="edge right"><i class="fold"></i></div>
    </div>
    <div class="taskbar"><i class="tsearch"></i><i class="tactive"></i><span>9:45 AM</span></div>
  </div>
</template>

<style>
body { background: #fff; }
</style>

<style scoped>
* { box-sizing: border-box; }
.screen { display: flex; flex-direction: column; min-height: 100vh; overflow: hidden; font: 22px/28px "Liberation Sans", Arial, sans-serif; color: #000; }
button { border: 0; padding: 0; margin: 0; background: none; font: inherit; color: inherit; display: flex; align-items: center; justify-content: center; }
h1, h2, h3, p, dl, dd, ul { margin: 0; padding: 0; font-weight: normal; font-size: inherit; }
a { color: inherit; text-decoration: none; }
svg { display: block; flex: none; }
i, b { flex: none; }
.fill { flex: 1; }
.desk { flex: 1; display: flex; }
.edge { width: 16px; flex: none; background: #fff; }
.edge.left { background: linear-gradient(#e8eaee 68px, #fff 68px, #fff 216px, #ccc 216px, #ccc 218px, #fff 218px); }
.edge.right { background: linear-gradient(#fff 45px, #0063b1 45px, #0063b1 91px, #d8dae0 91px, #d8dae0 94px, #f2f2f6 94px, #f2f2f6 285px, #d0d0d4 285px, #d0d0d4 287px, #fff 287px); }
.fold { display: block; width: 12px; height: 24px; margin: 11px 0 0 4px; background: #ffd975; }
.app { flex: 1; min-width: 0; display: flex; flex-direction: column; background: #222933; font-family: "Open Sans", "Noto Sans", sans-serif; color: #c8cacd; }

.titlebar { display: flex; height: 46px; align-items: center; }
.appbtn { width: 78px; height: 44px; margin-left: 2px; background: linear-gradient(#b4b4b4, #8a8a8a); border-top: 2px solid #ccc; overflow: hidden; }
.quick { display: flex; color: #dcdcdc; margin-left: 11px; }
.quick button { width: 48px; }
.quick .thin { width: 22px; }
.quick .dim { color: #5c6169; width: 51px; }
.quick .dim2 { color: #9a9da2; }
.title { flex: 1; display: flex; justify-content: center; gap: 26px; padding-right: 34px; color: #f4f4f4; }
.winbtns { display: flex; align-items: center; gap: 25px; padding-right: 13px; color: #ddd; }
.winbtns.small { gap: 11px; margin-left: auto; padding-right: 5px; }
.menubar { display: flex; align-items: center; gap: 50px; height: 44px; padding-left: 28px; border-bottom: 2px solid #3b4453; }
.menubar u, .pmain u { text-underline-offset: 4px; }
.doctabs { display: flex; height: 50px; padding: 6px 0 0 28px; }
.doc { width: 250px; justify-content: flex-start; padding: 0 24px 0 36px; background: #2e3543; clip-path: polygon(20px 0, 236px 0, 242px 6px, 250px 44px, 0 44px, 12px 8px); }
.doc.cur { background: #3b4453; color: #fff; font-weight: bold; justify-content: space-between; padding-left: 32px; width: 258px; clip-path: polygon(20px 0, 240px 0, 248px 8px, 258px 44px, 0 44px, 12px 8px); }
.doc svg { color: #a8abb0; }
.docplus { width: 42px; height: 28px; margin: 8px 0 0 16px; background: #2e3543; color: #a8abb0; border-radius: 10px; }
.ribbon { display: flex; gap: 1px; height: 64px; padding: 8px 0; background: #3b4453; }
.bar { display: flex; align-items: center; height: 48px; border: 2px solid #222933; color: #dcdcdc; }
.grip { width: 6px; height: 28px; background: repeating-linear-gradient(#cfcfcf 0 2px, transparent 2px 4px); }
.bar .grip { margin: 0 5px 0 4px; }
.tool { width: 46px; height: 44px; }
select { appearance: none; border: 0; border-radius: 0; font: inherit; color: #5c5c5c; background: #ccc url("data:image/svg+xml,%3Csvg xmlns='http://www.w3.org/2000/svg' width='14' height='12'%3E%3Cpath d='M1 1l6 9 6-9' fill='none' stroke='%23a0a0a0' stroke-width='2'/%3E%3C/svg%3E") no-repeat right 8px center; }
.dimsel { width: 199px; height: 44px; padding: 0 38px; }
.layer { display: flex; align-items: center; gap: 5px; width: 600px; height: 44px; padding-left: 4px; background: #ccc; border: 2px solid #bbb; }
.layer select { flex: 1; height: 40px; padding: 0 4px; }

.middle { flex: 1; display: flex; }
.work { position: relative; flex: 1; min-width: 0; display: flex; flex-direction: column; }
.viewrow { flex: 1; display: flex; border-bottom: 2px solid #fff; }
.canvas { position: relative; flex: 1; overflow: hidden; background-color: #212830;
  background-image:
    linear-gradient(to right, #2e3443 2px, transparent 2px),
    linear-gradient(#2e3443 2px, transparent 2px),
    linear-gradient(to right, transparent 35px, #262d37 35px, #262d37 37px, transparent 37px, transparent 70px, #262d37 70px, #262d37 72px, transparent 72px, transparent 104px, #262d37 104px, #262d37 106px, transparent 106px, transparent 139px, #262d37 139px, #262d37 141px, transparent 141px),
    linear-gradient(transparent 35px, #262d37 35px, #262d37 37px, transparent 37px, transparent 70px, #262d37 70px, #262d37 72px, transparent 72px, transparent 104px, #262d37 104px, #262d37 106px, transparent 106px, transparent 139px, #262d37 139px, #262d37 141px, transparent 141px);
  background-size: 174px 174px; background-position: 138px 90px; }
.viewlabel { padding: 12px 6px; font-size: 23px; color: #e8e8e8; }
.cubeview { position: absolute; right: 6px; top: 23px; }
.compass { font: bold 42px "Liberation Sans", sans-serif; fill: #a4a6aa; }
.ucs { position: absolute; left: 22px; bottom: 28px; }
.ucs text { font: 300 36px "Open Sans", sans-serif; fill: #fff; stroke: none; }
.vbar { width: 35px; flex: none; display: flex; flex-direction: column; align-items: center; padding: 10px 0; gap: 6px; background: #f0f0f0; color: #606060; }
.vbar .thumb { width: 29px; height: 34px; background: #cdcdcd; }
.hbar { display: flex; align-items: center; gap: 8px; height: 32px; padding: 0 42px 0 7px; background: #f0f0f0; color: #606060; }
.hbar .thumb { width: 34px; height: 30px; background: #cdcdcd; }
.command { display: flex; height: 130px; border-top: 4px solid #3b4453; padding-right: 4px; }
.cmdside { width: 49px; display: flex; flex-direction: column; align-items: center; gap: 16px; padding: 10px 5px 0 0; background: #2e3440; color: #ddd; }
.dots { width: 34px; height: 10px; background: repeating-linear-gradient(to right, #ccc 0 4px, transparent 4px 6px); border-radius: 1px; }
.cmdmain { flex: 1; display: flex; flex-direction: column; gap: 2px; padding: 2px 0 2px 1px; font: 23px/30px "Liberation Mono", monospace; color: #000; }
.history { flex: 1; background: #c8c8c8; padding: 19px 4px 0; }
.prompt { display: flex; align-items: center; height: 40px; background: #fff; padding: 4px 0 0 8px; color: #666; }
.prompt input { flex: 1; border: 0; padding: 0; font: inherit; outline: none; background: none; color: #000; margin-left: 3px; }

.dialog { position: absolute; border: 6px solid #0078d0; background: #f0f0f0; color: #000; font-family: "Liberation Sans", Arial, sans-serif; }
.dialog > header { display: flex; align-items: center; gap: 10px; height: 52px; padding: 0 14px 0 6px; background: #f00; color: #fff; font-size: 23px; }
.dialog > header h2 { flex: 1; }
.back { left: 1288px; top: 130px; width: 1724px; height: 200px; }
.front { left: 1005px; top: 302px; width: 2097px; }
.panes { display: flex; justify-content: space-between; height: 136px; }
.pane { width: 790px; display: flex; flex-direction: column; }
.ptools { display: flex; align-items: center; height: 70px; padding: 0 8px 10px; background: linear-gradient(#fcfcfc, #ececec); }
.ptools .grip { width: 4px; height: 36px; margin-right: 6px; background: repeating-linear-gradient(#b8b8b8 0 4px, transparent 4px 10px); }
.ptools button { width: 60px; height: 60px; }
.ptools svg { stroke-width: 1; }
.ptools .narrow { width: 22px; }
.ptools hr { width: 2px; height: 44px; margin: 0 4px; border: 0; background: #c4c4c4; }
.ptree { flex: 1; display: flex; gap: 11px; align-items: flex-start; padding: 6px 14px; background: #fff; border: 2px solid #828790; font-size: 21px; }
.ptree svg { margin-top: -2px; }
.ptree svg:first-child { margin-top: 5px; color: #444; }
.cols { display: flex; padding: 10px 4px 0 3px; height: 1128px; }
.partcol { width: 904px; }
.libcol { flex: 1; display: flex; flex-direction: column; }
.tabs { display: flex; align-items: flex-end; height: 42px; }
.tabs button { height: 37px; padding: 0 12px 3px; border: 2px solid #dcdcdc; border-bottom: 0; border-left: 0; white-space: nowrap; }
.tabs .cur { height: 42px; background: #fff; border-left: 2px solid #dcdcdc; padding: 0 15px 4px; }
.libcol .tabs button { flex: auto; padding: 0 0 3px; }
.page { border: 2px solid #dcdcdc; border-top: 0; background: #fff; }
.partcol .page { padding: 0 4px 5px 0; }
.libcol .page { flex: 1; background: #f0f0f0; border-bottom-color: #fff; margin-bottom: 3px; }
.listbox { display: flex; height: 1070px; overflow: hidden; border: 2px solid #696969; border-right: 0; border-bottom-color: #e3e3e3; background: #f0f0f0; }
table { border-collapse: collapse; table-layout: fixed; width: 862px; height: min-content; background: #fff; }
th, td { height: 34px; padding: 0 6px; text-align: left; font-weight: normal; line-height: 28px; border-right: 2px solid #f0f0f0; border-bottom: 2px solid #f0f0f0; white-space: nowrap; }
th { height: 36px; background: #f0f0f0; border-color: #a0a0a0; }
th.name { width: 462px; }
th span { display: flex; align-items: center; justify-content: space-between; }
tbody tr:nth-child(odd) { background: #d5d4e6; }
.vbar.list { gap: 10px; padding: 8px 0; }
.vbar.list .thumb { height: 146px; }
.divider { width: 12px; margin: 0 0 2px 5px; height: 1120px; background: #000; }
.assign { width: 116px; padding: 182px 14px; }
.assign button { width: 88px; height: 58px; background: #e1e1e1; border: 2px solid #adadad; }
.treebox { display: flex; height: 793px; overflow: hidden; border: 4px solid #6a6d74; border-right-width: 3px; border-color: #696969 #74777e #74777e #696969; background: #fff; margin-right: 1px; }
.treebox ul { flex: 1; list-style: none; font-size: 21px; padding-top: 2px; }
li { display: flex; height: 32px; align-items: center; padding-left: 5px; }
li.leaf { color: #f00; }
li span { line-height: 32px; padding: 0 4px; margin-left: -4px; }
li.on span { background: #0078d7; color: #fff; }
.cell { width: 38px; height: 32px; display: flex; align-items: center; justify-content: center; --v: repeating-linear-gradient(#808080 0 2px, transparent 2px 4px); --h: repeating-linear-gradient(to right, #808080 0 2px, transparent 2px 4px); background-repeat: no-repeat; }
.cell.v { background: var(--v) center / 2px 100% no-repeat; }
.cell.hz { background: var(--h) right center / 50% 2px no-repeat; }
.cell.own { background: var(--v) center top / 2px 100% no-repeat, var(--h) right center / 50% 2px no-repeat; }
.cell.own.last { background: var(--v) center top / 2px 50% no-repeat, var(--h) right center / 50% 2px no-repeat; }
.slot { width: 44px; padding-right: 8px; display: flex; justify-content: center; }
.vbar.tall { width: 34px; gap: 8px; padding: 8px 0; margin-right: 2px; }
.vbar.tall .thumb { height: 657px; }
.search { display: flex; align-items: center; width: 484px; height: 41px; margin: 10px 0 0 18px; padding: 0 10px; background: #fff; }
.search input { flex: 1; min-width: 0; border: 0; outline: none; padding: 0 2px; font: 26px/32px "Liberation Sans", Arial, sans-serif; background: none; }
.search input::placeholder { color: #888; opacity: 1; }
.page dl { width: 857px; margin: 12px 0 0 6px; }
.page dl div { display: flex; align-items: flex-end; height: 34px; border-bottom: 2px solid #a0a0a0; line-height: 24px; padding: 0 0 0 2px; }
.page dt { width: 267px; }
.page dd { position: relative; }
.ink { position: absolute; left: -13px; top: -20px; }
.front footer { display: flex; justify-content: flex-end; gap: 16px; height: 86px; padding: 14px 26px 0 0; }
.front footer button { width: 191px; height: 60px; background: #e1e1e1; border: 2px solid #adadad; }
.front footer .ok { border: 4px solid #0078d7; outline: 2px dotted #000; outline-offset: -6px; }

.palette { width: 716px; margin-bottom: 10px; display: flex; flex-direction: column; border-left: 4px solid #3b4453; color: #000; font: 24px/28px "Liberation Sans", Arial, sans-serif; background: #f0f0f0; }
.palette > h2 { height: 48px; line-height: 36px; padding: 0 0 0 30px; border-top: 4px solid #3b4453; background: #2e3341; color: #e6e6e6; font-family: "Open Sans", sans-serif; font-size: 23px; background-image: repeating-linear-gradient(#cfcfcf 0 2px, transparent 2px 4px); background-size: 6px 18px; background-position: 12px 12px; background-repeat: no-repeat; }
.pbody { flex: 1; display: flex; }
.side { width: 89px; border-right: 2px solid #a0a0a0; background: #f0f0f0; }
.side button, .rail button { width: 100%; }
.side .help { height: 60px; border: 3px solid #b8b8b8; background: #f0f0f0; outline: 2px solid #a9bfe0; outline-offset: -1px; }
.mode { height: 72px; padding: 4px 6px; background: #fff; border-bottom: 2px solid #b8b8b8; }
.mode button { height: 64px; border: 2px solid #222; color: #fff; background: linear-gradient(#0063b1, #0090ff); }
.hgrip { display: block; height: 5px; margin: 6px 18px 5px 6px; background: repeating-linear-gradient(to right, #bbb 0 4px, transparent 4px 8px); }
.s62 { height: 62px; }
.s56 { height: 56px; }
.s48 { height: 48px; }
.palette hr { height: 2px; margin: 5px 4px; border: 0; background: #b0b0b0; }
.pmain { flex: 1; display: flex; flex-direction: column; border-right: 2px solid #a0a0a0; background: #f1f1f1; }
.pmain nav { display: flex; gap: 32px; align-items: center; height: 46px; padding: 2px 0 0 19px; background: linear-gradient(to right, #f2f2f2, #fff); }
.pmain h3 { height: 50px; line-height: 48px; padding-left: 15px; background: #a0a0a0; color: #fff; font-size: 32px; font-weight: bold; }
.info { height: 392px; padding: 14px 20px; background: #fff; }
.info div { height: 98px; }
.info dt { font-weight: bold; }
.info dd { color: #444; }
.actions { flex: 1; padding-top: 4px; }
.actions button { height: 58px; justify-content: flex-start; gap: 13px; padding-left: 8px; }
.actions .off { color: #777; }
.actions .off svg { color: #aaa; }
.sections { border-bottom: 2px solid #a0a0a0; }
.sections button { width: 100%; height: 48px; justify-content: flex-start; padding: 0 22px 2px; border-top: 2px solid #a0a0a0; background: linear-gradient(#fff, #ececec); font-weight: bold; color: #666; }
.sections .cur { background: #d9eaf9; color: #000; }
.rail { width: 50px; display: flex; flex-direction: column; background: linear-gradient(to right, #f2f2f2, #fff); }
.rail .hgrip { margin-right: 2px; }
.nums { flex-direction: column; font: bold 18px/22px "Liberation Sans", sans-serif; }
.nums s { color: #333; text-decoration-thickness: 3px; }
.nums span { color: #1663b5; }
.pager { display: flex; justify-content: space-between; align-items: center; height: 32px; padding: 0 2px; background: #f0f0f0; color: #555; }

.statusbar { display: flex; justify-content: space-between; height: 58px; border-top: 2px solid #464b55; }
.layouts { display: flex; height: 34px; padding-left: 24px; }
.layouts button { width: 130px; background: #2e3543; clip-path: polygon(0 0, 100% 0, calc(100% - 12px) 34px, 12px 34px); font-size: 22px; padding-bottom: 2px; }
.layouts .cur { width: 116px; background: #3b4453; color: #fff; font-weight: bold; }
.layouts .add { width: 44px; height: 30px; margin-left: 8px; padding: 0; color: #a8abb0; }
.toggles { display: flex; gap: 6px; padding: 2px 4px 0 0; color: #dcdcdc; font-size: 23px; }
.block { display: flex; height: 48px; background: #3b4453; }
.block:nth-child(6) { margin-left: -4px; }
.block .on { background: #5b8dc4; margin: 2px 0; }
.taskbar { display: flex; height: 16px; background: #1e1f1a; overflow: hidden; color: #fff; font: 22px/28px "Open Sans", sans-serif; padding-left: 112px; }
.tsearch { width: 576px; background: #f2f2f2; border-top: 2px solid #bbb; }
.tactive { width: 90px; margin-left: 787px; background: #4a4b47; }
.taskbar span { margin: 7px 142px 0 auto; }
</style>
